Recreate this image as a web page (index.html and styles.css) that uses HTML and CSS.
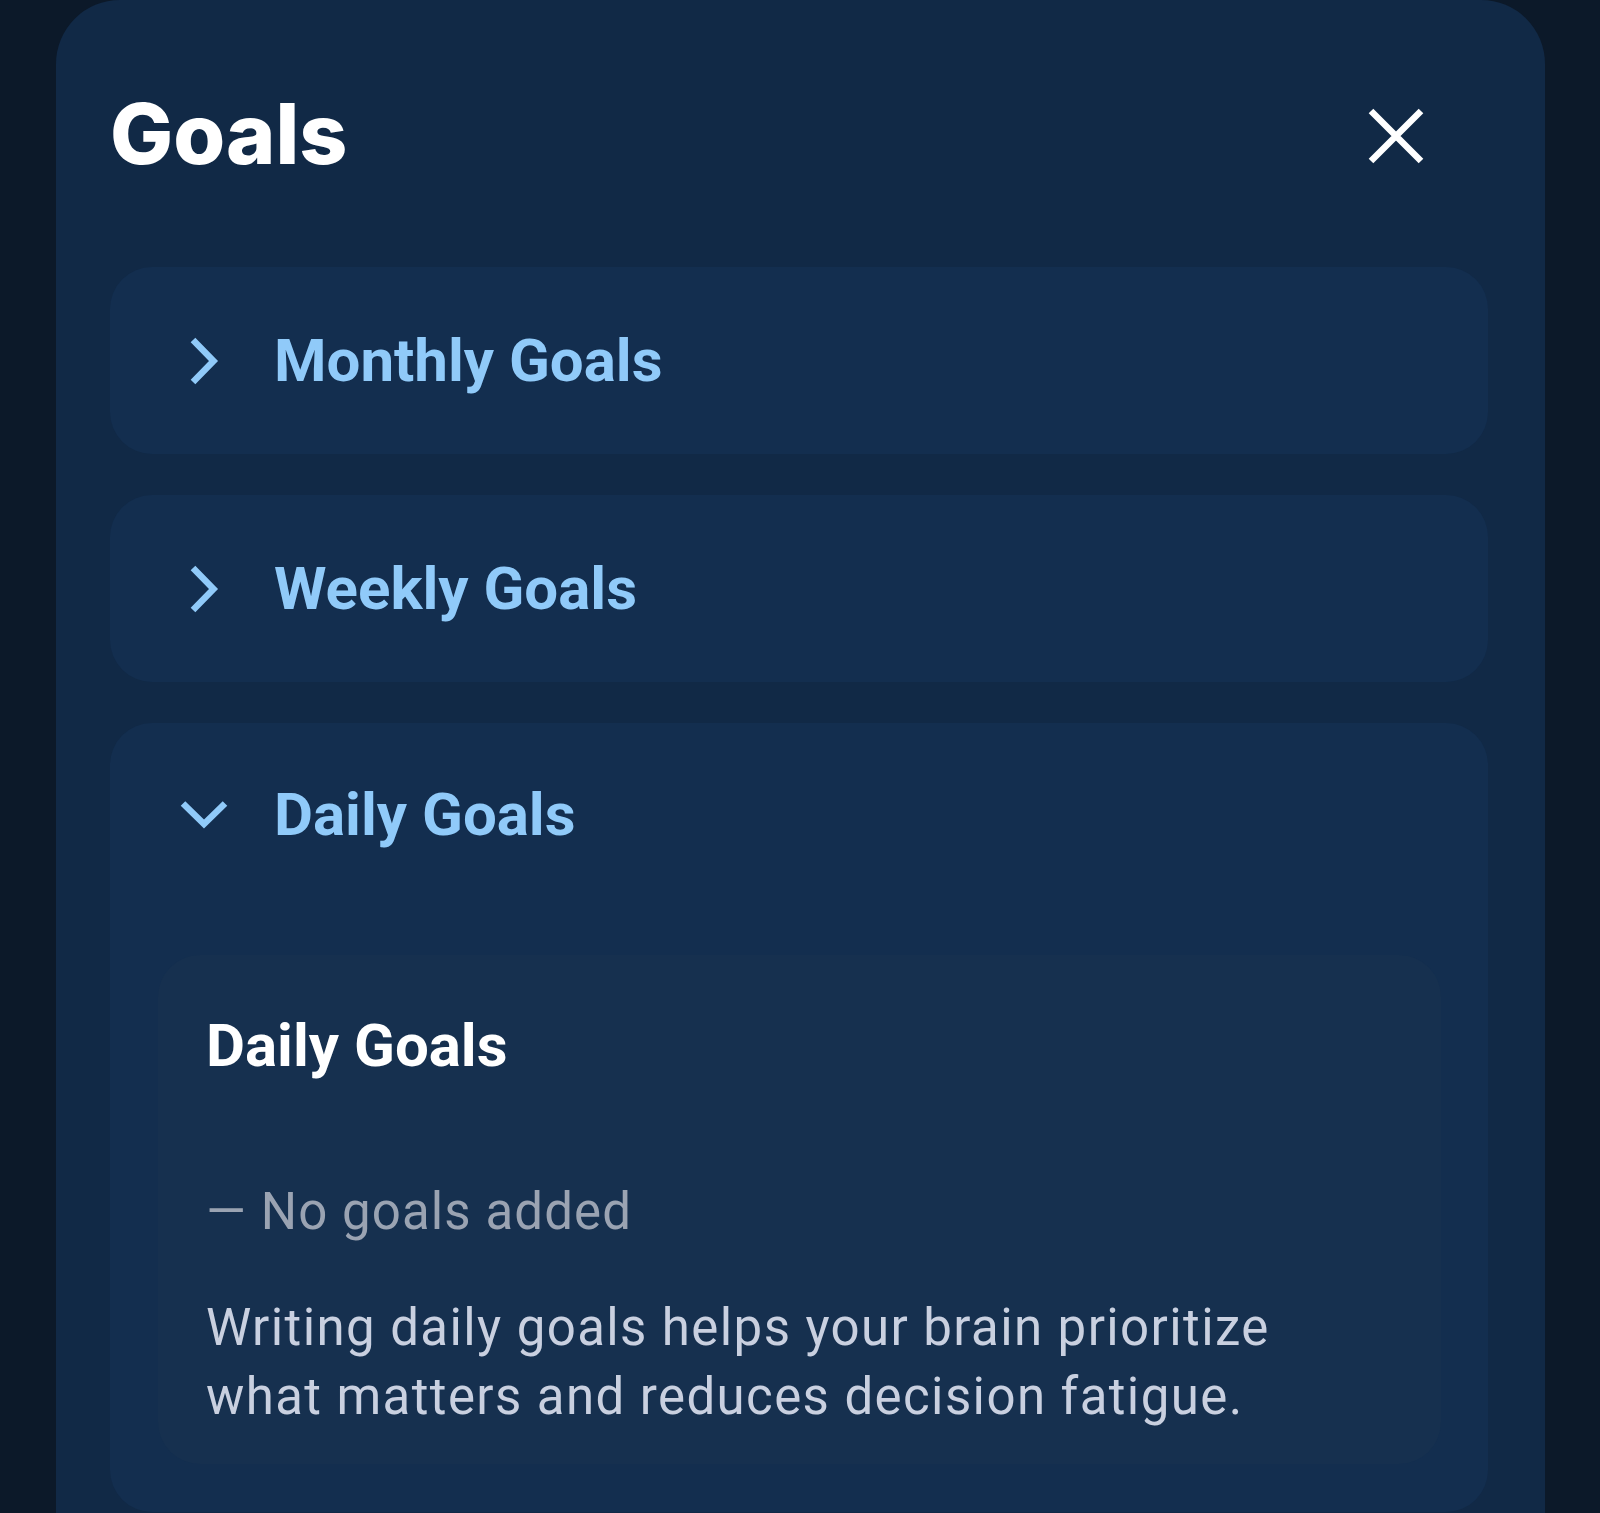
FILE: index.html
```html
<!DOCTYPE html>
<html lang="en">
<head>
<meta charset="utf-8">
<title>Goals</title>
<link rel="stylesheet" href="styles.css">
</head>
<body>
<div class="modal">
  <div class="modal-header">
    <h1 class="modal-title">Goals</h1>
    <button class="close-btn" aria-label="Close">
      <svg width="56" height="56" viewBox="0 0 56 56"><path d="M3 3 L53 53 M53 3 L3 53" stroke="#ffffff" stroke-width="6.5" fill="none"/></svg>
    </button>
  </div>
  <div class="accordion">
    <section class="acc-item">
      <div class="acc-head">
        <span class="acc-icon"><svg width="48" height="48" viewBox="0 0 48 48"><path d="M13 3 L33.5 24 L13 45" stroke="#90caf9" stroke-width="6.5" fill="none"/></svg></span>
        <span class="acc-title">Monthly Goals</span>
      </div>
    </section>
    <section class="acc-item">
      <div class="acc-head">
        <span class="acc-icon"><svg width="48" height="48" viewBox="0 0 48 48"><path d="M13 3 L33.5 24 L13 45" stroke="#90caf9" stroke-width="6.5" fill="none"/></svg></span>
        <span class="acc-title">Weekly Goals</span>
      </div>
    </section>
    <section class="acc-item open">
      <div class="acc-head head-open">
        <span class="acc-icon"><svg width="48" height="48" viewBox="0 0 48 48"><path d="M3 13.5 L24 34 L45 13.5" stroke="#90caf9" stroke-width="6.5" fill="none"/></svg></span>
        <span class="acc-title">Daily Goals</span>
      </div>
      <div class="acc-body">
        <div class="goal-card">
          <h2 class="card-title">Daily Goals</h2>
          <p class="empty">— No goals added</p>
          <p class="tip">Writing daily goals helps your brain prioritize what matters and reduces decision fatigue.</p>
        </div>
      </div>
    </section>
  </div>
</div>
</body>
</html>
```
FILE: styles.css
```css
html, body {
  margin: 0;
  padding: 0;
  height: 1513px;
  overflow: hidden;
  background: #0c1929;
  font-family: Roboto, "Liberation Sans", sans-serif;
}

.modal {
  margin: 0 55px 0 56px;
  min-height: 1600px;
  background: #112946;
  border-radius: 64px 64px 0 0;
  padding: 84px 57px 0 54px;
  box-sizing: border-box;
}

.modal-header {
  display: flex;
  align-items: center;
  justify-content: space-between;
  height: 100px;
}

.modal-title {
  margin: 0;
  font-family: Inter, "Liberation Sans", sans-serif;
  font-weight: 800;
  font-size: 84px;
  line-height: 100px;
  color: #ffffff;
}

.close-btn {
  width: 56px;
  height: 56px;
  margin-right: 64px;
  margin-top: 4px;
  padding: 0;
  border: none;
  background: transparent;
  display: flex;
}

.accordion {
  margin-top: 83px;
  display: flex;
  flex-direction: column;
  gap: 41px;
}

.acc-item {
  background: #132e4f;
  border-radius: 42px;
}

.acc-head {
  height: 187px;
  display: flex;
  align-items: center;
  padding-left: 70px;
}

.head-open {
  height: 182px;
}

.acc-icon {
  width: 48px;
  height: 48px;
  display: flex;
  margin-right: 46px;
}

.acc-title {
  font-weight: 700;
  font-size: 60px;
  color: #90caf9;
}

.acc-body {
  padding: 50px 47px 48px 48px;
}

.goal-card {
  background: #16304f;
  border-radius: 42px;
  padding: 55px 48px 33px 48px;
}

.card-title {
  margin: 0;
  font-weight: 700;
  font-size: 60px;
  line-height: 72px;
  color: #ffffff;
}

.empty {
  margin: 100px 0 0 0;
  font-size: 51px;
  line-height: 60px;
  letter-spacing: 1.1px;
  color: #9aa3b2;
}

.tip {
  margin: 51px 0 0 0;
  font-size: 51px;
  line-height: 69px;
  letter-spacing: 1.4px;
  color: #c9d0e0;
  max-width: 1120px;
}
```
